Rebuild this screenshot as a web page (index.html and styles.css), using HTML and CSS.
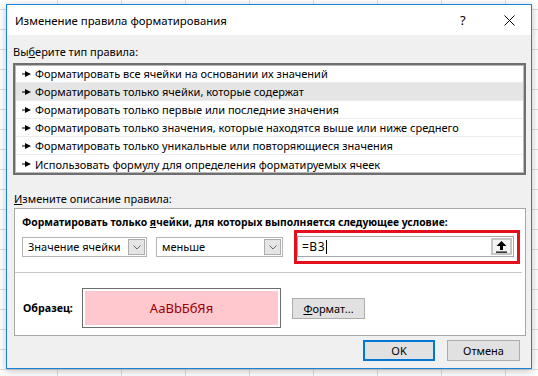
FILE: index.html
```html
<!DOCTYPE html>
<html lang="ru">
<head>
    <meta charset="UTF-8">
    <title>Изменение правила форматирования</title>
    <link rel="stylesheet" href="styles.css">
</head>
<body>
    <div class="sheet">
        <div class="dialog">
            <div class="titlebar">
                <span class="title">Изменение правила форматирования</span>
                <span class="help">?</span>
                <span class="close">
                    <svg width="11" height="11" viewBox="0 0 11 11"><path d="M0.5 0.5L10.5 10.5M10.5 0.5L0.5 10.5" stroke="#000" stroke-width="1" fill="none"/></svg>
                </span>
            </div>
            <div class="content">
                <div class="label">Вы<u>б</u>ерите тип правила:</div>
                <ul class="rules">
                    <li><svg class="bullet" width="9" height="6" viewBox="0 0 9 6"><path d="M0 2.5h4v1H0z M3 0l6 3-6 3z" fill="#000"/></svg>Форматировать все ячейки на основании их значений</li>
                    <li class="selected"><svg class="bullet" width="9" height="6" viewBox="0 0 9 6"><path d="M0 2.5h4v1H0z M3 0l6 3-6 3z" fill="#000"/></svg>Форматировать только ячейки, которые содержат</li>
                    <li><svg class="bullet" width="9" height="6" viewBox="0 0 9 6"><path d="M0 2.5h4v1H0z M3 0l6 3-6 3z" fill="#000"/></svg>Форматировать только первые или последние значения</li>
                    <li><svg class="bullet" width="9" height="6" viewBox="0 0 9 6"><path d="M0 2.5h4v1H0z M3 0l6 3-6 3z" fill="#000"/></svg>Форматировать только значения, которые находятся выше или ниже среднего</li>
                    <li><svg class="bullet" width="9" height="6" viewBox="0 0 9 6"><path d="M0 2.5h4v1H0z M3 0l6 3-6 3z" fill="#000"/></svg>Форматировать только уникальные или повторяющиеся значения</li>
                    <li><svg class="bullet" width="9" height="6" viewBox="0 0 9 6"><path d="M0 2.5h4v1H0z M3 0l6 3-6 3z" fill="#000"/></svg>Использовать формулу для определения форматируемых ячеек</li>
                </ul>
                <div class="label label-edit"><u>И</u>змените описание правила:</div>
                <div class="group">
                    <div class="condition">
                        <div class="heading">Форматировать только <u>я</u>чейки, для которых выполняется следующее условие:</div>
                        <div class="fields">
                            <div class="combo combo-value">
                                <span class="combo-text">Значение ячейки</span>
                                <span class="drop"><svg width="8" height="5" viewBox="0 0 8 5"><path d="M0.5 0.5L4 4 7.5 0.5" stroke="#6a6a6a" fill="none"/></svg></span>
                            </div>
                            <div class="combo combo-op">
                                <span class="combo-text">меньше</span>
                                <span class="drop"><svg width="8" height="5" viewBox="0 0 8 5"><path d="M0.5 0.5L4 4 7.5 0.5" stroke="#6a6a6a" fill="none"/></svg></span>
                            </div>
                            <div class="highlight">
                                <div class="formula">
                                    <span class="formula-text">=B3</span>
                                    <span class="caret"></span>
                                    <span class="ref-btn"><svg width="11" height="12" viewBox="0 0 11 12"><path d="M5.5 0L10.5 5H7V9H4V5H0.5Z M0 10.5h11v1.3H0z" fill="#000"/></svg></span>
                                </div>
                            </div>
                        </div>
                    </div>
                    <div class="divider"></div>
                    <div class="sample">
                        <span class="sample-label">Образец:</span>
                        <div class="preview"><div class="preview-fill">AaBbБбЯя</div></div>
                        <button class="btn btn-format"><u>Ф</u>ормат...</button>
                    </div>
                </div>
                <div class="actions">
                    <button class="btn btn-default">OK</button>
                    <button class="btn">Отмена</button>
                </div>
            </div>
        </div>
    </div>
</body>
</html>
```

FILE: styles.css
```css
body {
    margin: 0;
    font-family: "Noto Sans", "Open Sans", sans-serif;
    font-size: 11px;
    color: #000;
}
.sheet {
    width: 538px;
    height: 376px;
    padding: 4px 0 0 6px;
    box-sizing: border-box;
    overflow: hidden;
    background-color: #fff;
    background-image:
        linear-gradient(to right, #dcdcdc 1px, transparent 1px),
        linear-gradient(to bottom, #dcdcdc 1px, transparent 1px);
    background-size: 64px 20px;
    background-position: 57px 0, 0 9px;
}
.dialog {
    width: 526px;
    box-sizing: border-box;
    border: 1px solid #1883d7;
    background: #f0f0f0;
    box-shadow: 0 2px 8px rgba(0, 0, 0, 0.25);
}
.titlebar {
    display: flex;
    align-items: center;
    height: 30px;
    padding-left: 8px;
    background: #fff;
}
.title {
    flex: 1;
    font-size: 11.4px;
}
.help {
    width: 8px;
    margin-right: 36px;
    font-size: 13px;
}
.close {
    display: flex;
    width: 11px;
    margin-right: 16px;
}
.content {
    padding: 9px 5px 7px 6px;
}
.label {
    line-height: 16px;
    margin-bottom: 3px;
}
.label-edit {
    margin: 16px 0 1px 1px;
}
.rules {
    list-style: none;
    margin: 0;
    padding: 0 1px;
    background: #fff;
    border: 2px solid #6f6f6f;
    box-shadow: inset 0 0 0 1px #b9b9b9;
}
.rules li {
    display: flex;
    align-items: center;
    height: 18px;
    box-sizing: border-box;
    padding-left: 6px;
    border-bottom: 1px solid #ececec;
    white-space: nowrap;
}
.rules li:last-child {
    border-bottom: none;
}
.rules li.selected {
    background: #e5e5e5;
}
.bullet {
    margin-right: 4px;
}
.group {
    margin-left: 1px;
    background: #fff;
    border: 1px solid #a8a8a8;
}
.condition {
    padding: 6px 0 0 7px;
}
.heading {
    font-weight: bold;
    font-size: 10.35px;
    line-height: 15px;
    white-space: nowrap;
}
.fields {
    display: flex;
    align-items: center;
}
.combo {
    display: flex;
    align-items: stretch;
    height: 20px;
    box-sizing: border-box;
    padding: 1px;
    border: 1px solid #b4b4b4;
    background: #fff;
}
.combo-value {
    width: 125px;
}
.combo-op {
    width: 127px;
    margin-left: 9px;
}
.combo-text {
    flex: 1;
    padding-left: 4px;
    line-height: 16px;
    white-space: nowrap;
}
.drop {
    display: flex;
    align-items: center;
    justify-content: center;
    width: 17px;
    box-sizing: border-box;
    border: 1px solid #adadad;
    background: #e5e5e5;
}
.highlight {
    margin-left: 11px;
    padding: 3px 3px 4px 0;
    border: 3px solid #e3101c;
}
.formula {
    display: flex;
    align-items: center;
    width: 217px;
    height: 21px;
    box-sizing: border-box;
    padding: 1px;
    border: 1px solid #a8a8a8;
    background: #fff;
}
.formula-text {
    padding-left: 3px;
    font-size: 12px;
    letter-spacing: 0.5px;
}
.caret {
    width: 1px;
    height: 14px;
    margin-left: 1px;
    background: #000;
}
.ref-btn {
    display: flex;
    align-items: center;
    justify-content: center;
    margin-left: auto;
    width: 21px;
    height: 17px;
    box-sizing: border-box;
    border: 2px solid #c6c6c6;
    background: #f4f4f4;
}
.divider {
    height: 1px;
    margin: 8px 3px 0 0;
    background: #c8c8c8;
}
.sample {
    display: flex;
    align-items: center;
    padding: 15px 0 7px 8px;
}
.sample-label {
    width: 59px;
    font-weight: bold;
    font-size: 10.7px;
}
.preview {
    width: 199px;
    height: 40px;
    box-sizing: border-box;
    padding: 2px;
    border: 1px solid #6d6d6d;
    background: #fff;
}
.preview-fill {
    height: 100%;
    display: flex;
    align-items: center;
    justify-content: center;
    background: #ffc7ce;
    color: #9c0006;
    font-size: 13px;
}
.btn {
    height: 21px;
    padding: 0;
    font-family: inherit;
    font-size: 11px;
    color: #000;
    background: #e1e1e1;
    border: 1px solid #adadad;
}
.btn-format {
    width: 73px;
    margin-left: 11px;
}
.actions {
    display: flex;
    justify-content: flex-end;
    gap: 12px;
    margin-top: 4px;
    padding-right: 6px;
}
.actions .btn {
    width: 73px;
}
.actions .btn-default {
    width: 72px;
    border: 2px solid #0078d7;
}
```
